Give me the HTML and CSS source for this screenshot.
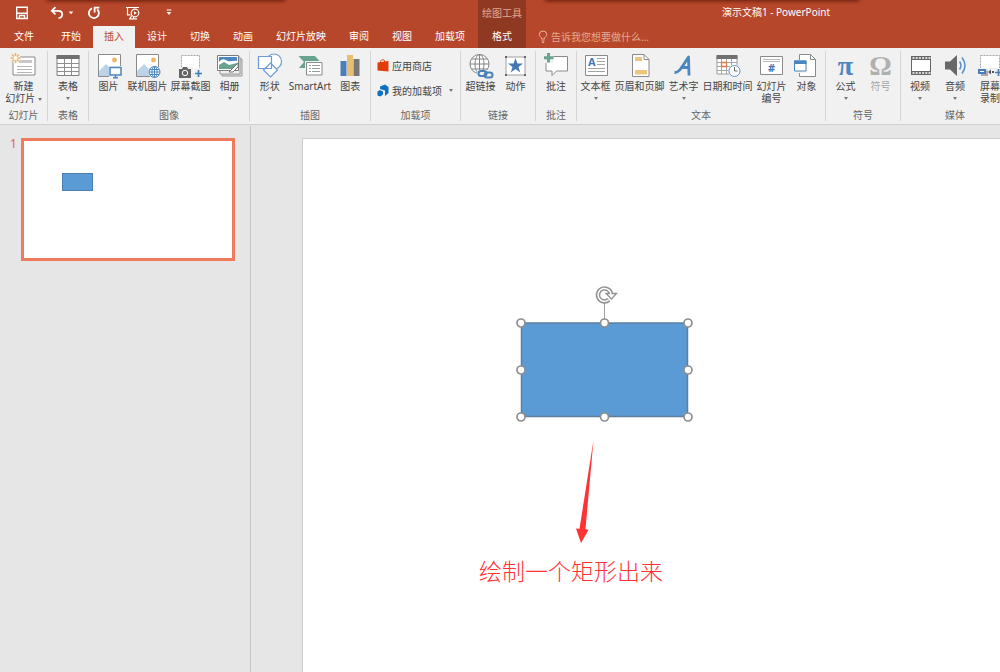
FILE: index.html
```html
<!DOCTYPE html>
<html lang="zh-CN">
<head>
  <meta charset="UTF-8">
  <meta name="viewport" content="width=device-width, initial-scale=1.0">
  <title>演示文稿1 - PowerPoint</title>
  <link rel="stylesheet" href="styles.css">
</head>
<body>

<header class="titlebar">
  <div class="titlebar-left">
    <div class="quick-access">
      <button class="qa-save" aria-label="保存">
        <svg width="14" height="14" viewBox="0 0 14 14" fill="none" stroke="#fff" stroke-width="1.4"><path d="M1.700 1.200h10.600v11.300H1.700zM1.700 7.200h10.600M4.500 12.500v-3h5v3"/></svg>
      </button>
      <button class="qa-undo" aria-label="撤消">
        <svg width="14" height="14" viewBox="0 0 14 14" fill="none" stroke="#fff" stroke-width="1.8"><path d="M5.5 1.2 1.8 4.8l3.7 3.6M2 4.8h6.2c2.6 0 4 1.5 4 3.5S10.700 12 8.500 12.200"/></svg>
      </button>
      <button class="qa-more" aria-label="撤消列表">
        <svg width="6" height="4" viewBox="0 0 6 4"><path d="M.7.5h4.600L3 3.200z" fill="#fff"/></svg>
      </button>
      <button class="qa-redo" aria-label="重复">
        <svg width="14" height="14" viewBox="0 0 14 14" fill="none" stroke="#fff" stroke-width="1.8"><path d="M5 2.400a5 5 0 1 0 5.200.9M7.600 6.500V1.700h4.800"/></svg>
      </button>
      <button class="qa-show" aria-label="从头开始">
        <svg width="16" height="14" viewBox="0 0 16 14" fill="none" stroke="#fff" stroke-width="1.200"><path d="M1 1.500h13M2.500 1.500v7.300h3M7 9.500 4.500 12.800M4 12.800h8M8.500 11v2"/><circle cx="10" cy="7" r="3.800"/><path d="m9 5.200 2.800 1.800L9 8.800z" fill="#fff" stroke="none"/></svg>
      </button>
      <button class="qa-custom" aria-label="自定义快速访问工具栏">
        <svg width="6" height="7" viewBox="0 0 6 7"><path d="M.7.5h4.600v1H.7zM.7 3h4.600L3 6z" fill="#fff"/></svg>
      </button>
    </div>
    <nav class="tabs">
      <button class="tab tab-file">文件</button>
      <button class="tab">开始</button>
      <button class="tab active">插入</button>
      <button class="tab">设计</button>
      <button class="tab">切换</button>
      <button class="tab">动画</button>
      <button class="tab">幻灯片放映</button>
      <button class="tab">审阅</button>
      <button class="tab">视图</button>
      <button class="tab">加载项</button>
    </nav>
  </div>
  <div class="context-tab">
    <span class="context-title">绘图工具</span>
    <button class="tab">格式</button>
  </div>
  <div class="titlebar-right">
    <div class="window-title">演示文稿1 - PowerPoint</div>
    <label class="tell-me">
      <svg width="10" height="13" viewBox="0 0 10 13" fill="none" stroke="#e8b5a5"><path d="M3.500 9V7.800C2.200 7 1.300 5.800 1.300 4.500a3.700 3.500 0 0 1 7.400 0c0 1.300-.9 2.500-2.200 3.300V9zM3.500 11h3M4 12.400h2"/></svg>
      <input type="text" placeholder="告诉我您想要做什么...">
    </label>
  </div>
</header>

<section class="ribbon">
  <div class="group group-slides">
    <div class="group-items">
      <button class="tool">
        <svg class="icon" viewBox="0 0 26 26"><path d="M3 4h22v18H3z" fill="#fff" stroke="#8a8a8a"/><path d="M9 7h13v3H9z" fill="#c8c8c8"/><path d="M7 13.500h15M7 16.500h15M7 19.500h15" stroke="#b5b5b5"/><circle cx="5.500" cy="5" r="5" fill="#f1f1f1"/><path d="M5.500 0v10M.5 5h10M2 1.500l7 7M9 1.500l-7 7" stroke="#eab765" stroke-width="1.500"/><circle cx="5.500" cy="5" r="2" fill="#fff"/></svg>
        <span>新建<br>幻灯片 <i class="caret"></i></span>
      </button>
    </div>
    <div class="group-name">幻灯片</div>
  </div>

  <div class="group group-single">
    <div class="group-items">
      <button class="tool">
        <svg class="icon" viewBox="0 0 26 26"><path d="M2 2.500h22v20H2z" fill="#fff" stroke="#808080"/><path d="M1.500 2h23v4h-23z" fill="#707070"/><path d="M2 10.500h22M2 14.500h22M2 18.500h22M9.500 6v16M16.500 6v16" stroke="#8f8f8f"/></svg>
        <span>表格</span><i class="caret"></i>
      </button>
    </div>
    <div class="group-name">表格</div>
  </div>

  <div class="group group-images">
    <div class="group-items">
      <button class="tool">
        <svg class="icon" viewBox="0 0 26 26"><path d="M2.500 1.500h22v22h-22z" fill="#fff" stroke="#8a8a8a"/><path d="M3 23v-5l7-7 7 7v5z" fill="#bdd3ea"/><circle cx="18.500" cy="7" r="2.400" fill="#eab765"/><path d="M13 13h13v12H13z" fill="#f1f1f1"/><path d="M14 14.500h11v7.500H14z" fill="#fff" stroke="#4a86c0" stroke-width="1.500"/><path d="M19.500 22v2.500M17 24.800h5" stroke="#4a86c0" stroke-width="1.500"/></svg>
        <span>图片</span>
      </button>
      <button class="tool">
        <svg class="icon" viewBox="0 0 26 26"><path d="M1.500 1.500h22v22h-22z" fill="#fff" stroke="#8a8a8a"/><path d="M2 23v-5l7-7 7 7v5z" fill="#bdd3ea"/><circle cx="18.500" cy="7" r="2.400" fill="#eab765"/><circle cx="19.500" cy="19" r="6.500" fill="#f1f1f1"/><g fill="#fff" stroke="#4a86c0"><circle cx="19.500" cy="19" r="5.500"/><ellipse cx="19.500" cy="19" rx="2.600" ry="5.500"/><path d="M14 19h11M15 16.500h9M15 21.500h9M19.500 13.500v11"/></g></svg>
        <span>联机图片</span>
      </button>
      <button class="tool">
        <svg class="icon" viewBox="0 0 26 26"><path d="M3.500 2.500h18v18h-18z" fill="#fff" stroke="#a5a5a5" stroke-dasharray="2 1"/><path d="M0 14h15v11H0z" fill="#f1f1f1"/><path d="M1 16h3l1-2h4l1 2h3v9H1z" fill="#666"/><circle cx="7" cy="20" r="2.700" fill="#666" stroke="#fff"/><path d="M16 15h9v10h-9z" fill="#f1f1f1"/><path d="M20.500 17v7M17 20.500h7" stroke="#3f7fbe" stroke-width="1.700"/></svg>
        <span>屏幕截图</span><i class="caret"></i>
      </button>
      <button class="tool">
        <svg class="icon" viewBox="0 0 26 26"><path d="M5 6h20v17H5z" fill="#d9d9d9" stroke="#9a9a9a"/><path d="M3 4h20v17H3z" fill="#eee" stroke="#9a9a9a"/><path d="M.5 2.500h21v15H.5z" fill="#fff" stroke="#7d7d7d"/><path d="M2 4h18v5H2z" fill="#4a86c0"/><path d="M2 9c4-5 6-2 9-1s6-1 9 0v2H2z" fill="#fff"/><path d="M2 12l5-3 5 3 8-2v6H2z" fill="#69a38f"/><path d="m12 19 9-9v4l-5 5z" fill="#fff" stroke="#777"/></svg>
        <span>相册</span><i class="caret"></i>
      </button>
    </div>
    <div class="group-name">图像</div>
  </div>

  <div class="group group-illustrations">
    <div class="group-items">
      <button class="tool">
        <svg class="icon" viewBox="0 0 26 26" fill="#fff" stroke="#6b9bd0" stroke-width="1.200"><circle cx="17" cy="8.500" r="7.500"/><path d="M1.500 3.500h13v12h-13zM13.500 10l7 7-7 7-7-7z"/></svg>
        <span>形状</span><i class="caret"></i>
      </button>
      <button class="tool">
        <svg class="icon" viewBox="0 0 26 26"><path d="M1.500 3H18l4.500 5-3 7H2l5-6z" fill="#69a38f"/><path d="M8 8h18v15H8z" fill="#f1f1f1"/><path d="M9.500 9.500h15.500V22H9.500z" fill="#fff" stroke="#8a8a8a"/><path d="M12 12.500h2M15 12.500h8M12 15.500h2M15 15.500h8M12 18.500h2M15 18.500h8" stroke="#999"/></svg>
        <span>SmartArt</span>
      </button>
      <button class="tool">
        <svg class="icon" viewBox="0 0 26 26"><path d="M3.500 8h6v15h-6z" fill="#4a7ebb"/><path d="M10 2h6v21h-6z" fill="#e8be73"/><path d="M16.500 6h6v17h-6z" fill="#777"/></svg>
        <span>图表</span>
      </button>
    </div>
    <div class="group-name">插图</div>
  </div>

  <div class="group group-addins">
    <div class="group-items group-rows">
      <button class="tool-row">
        <svg width="12" height="13" viewBox="0 0 12 13"><path d="M.5 3.500 11.500 2v10.500L.5 11.500z" fill="#e03c0c"/><path d="M3.500 4V2.500c0-2 4-2.500 4-.5v1.500" fill="none" stroke="#e03c0c"/></svg>
        应用商店
      </button>
      <button class="tool-row">
        <svg width="12" height="13" viewBox="0 0 12 13"><path d="m3 2.500 5-2L11.500 3v6L8 12V6.500L3 5z" fill="#0f6fc0"/><path d="m.5 7.500 2.500-1.500L6 7.500v3L3.500 12.500.5 11.500z" fill="#0f6fc0"/></svg>
        我的加载项 <i class="caret"></i>
      </button>
    </div>
    <div class="group-name">加载项</div>
  </div>

  <div class="group group-pair">
    <div class="group-items">
      <button class="tool">
        <svg class="icon" viewBox="0 0 26 26" fill="none"><g stroke="#858585"><circle cx="11.500" cy="11" r="9.500" fill="#fff"/><ellipse cx="11.500" cy="11" rx="4.500" ry="9.500"/><path d="M2 11h19M3.500 6h16M3.500 16h16M11.500 1.500v19"/></g><path d="M9 17h17v9H9z" fill="#f1f1f1"/><g stroke="#4a80b8" stroke-width="2"><rect x="10.500" y="18" width="8" height="5" rx="2.500"/><rect x="16.500" y="19.500" width="8" height="5" rx="2.500"/></g></svg>
        <span>超链接</span>
      </button>
      <button class="tool">
        <svg class="icon" viewBox="0 0 26 26"><path d="M3 4h19v18H3z" fill="#fff" stroke="#a0a0a0"/><path d="M2 3h2v2H2zM21 3h2v2h-2zM2 21h2v2H2zM21 21h2v2h-2z" fill="#666"/><path d="m12.500 5 1.900 5.500h5.600l-4.500 3.400 1.700 5.600-4.700-3.400-4.700 3.400 1.700-5.600L5 10.500h5.600z" fill="#4178b5"/></svg>
        <span>动作</span>
      </button>
    </div>
    <div class="group-name">链接</div>
  </div>

  <div class="group group-single">
    <div class="group-items">
      <button class="tool">
        <svg class="icon" viewBox="0 0 26 26"><path d="M4 3.500h20.500V18h-11L9 22.500V18H3V6z" fill="#fff" stroke="#8a8a8a"/><path d="M0 0h10.500v10H0z" fill="#f1f1f1"/><path d="M5.500 0v9.500M1 4.700h9.500" stroke="#69a38f" stroke-width="3"/></svg>
        <span>批注</span>
      </button>
    </div>
    <div class="group-name">批注</div>
  </div>

  <div class="group group-text">
    <div class="group-items">
      <button class="tool">
        <svg class="icon" viewBox="0 0 26 26"><path d="M2.500 2.500h22v20h-22z" fill="#fff" stroke="#8a8a8a"/><text x="5" y="13" class="icon-a">A</text><path d="M14 5.500h8M14 8.500h8M14 11.500h8M5 15.500h17M5 18.500h17" stroke="#a5a5a5"/></svg>
        <span>文本框</span><i class="caret"></i>
      </button>
      <button class="tool">
        <svg class="icon" viewBox="0 0 26 26"><path d="M5.500 1.500h11.500l5 5v17H5.500z" fill="#fff" stroke="#8a8a8a"/><path d="M17 1.500v5h5" fill="none" stroke="#8a8a8a"/><path d="M8 4h7v4H8zM8 17h12v4.500H8z" fill="#edc57c"/></svg>
        <span>页眉和页脚</span>
      </button>
      <button class="tool">
        <svg class="icon" viewBox="0 0 26 26" fill="none" stroke="#4a86c0" stroke-width="2.800"><path d="M3.500 19.500C8.500 20 11.500 13 17.500 4l.5 18.500M9.500 14.500H18" stroke-linejoin="round"/></svg>
        <span>艺术字</span><i class="caret"></i>
      </button>
      <button class="tool">
        <svg class="icon" viewBox="0 0 26 26"><path d="M2 3h20v18H2z" fill="#fff" stroke="#999"/><path d="M1.500 2h21v4h-21z" fill="#707070"/><path d="M2 9.500h20M2 13.500h20M2 17.500h20M6.500 6v15M11.500 6v15M16.500 6v15" stroke="#a5a5a5"/><path d="M6.500 9.500h5v4h-5z" fill="#fff" stroke="#e27a45" stroke-width="1.300"/><circle cx="19.500" cy="18" r="6.500" fill="#f1f1f1"/><circle cx="19.500" cy="18" r="5.500" fill="#fff" stroke="#5b94cd"/><path d="M19.500 14v4h3" fill="none" stroke="#666"/></svg>
        <span>日期和时间</span>
      </button>
      <button class="tool">
        <svg class="icon" viewBox="0 0 26 26"><path d="M1.500 3.500h22v18h-22z" fill="#fff" stroke="#8a8a8a"/><path d="M4 6.500h17M4 8.500h17" stroke="#bbb"/><text x="9" y="19" class="icon-a">#</text></svg>
        <span>幻灯片<br>编号</span>
      </button>
      <button class="tool">
        <svg class="icon" viewBox="0 0 26 26"><path d="M5.500 1.500h11l5 5v17h-16z" fill="#fff" stroke="#8a8a8a"/><path d="M16.500 1.500v5h5" fill="none" stroke="#8a8a8a"/><path d="M0 7h13v13H0z" fill="#f1f1f1"/><path d="M.5 8h11.500v10H.5z" fill="#fff" stroke="#4a86c0"/><path d="M0 7.500h12.500V11H0z" fill="#4a86c0"/></svg>
        <span>对象</span>
      </button>
    </div>
    <div class="group-name">文本</div>
  </div>

  <div class="group group-pair">
    <div class="group-items">
      <button class="tool">
        <span class="icon icon-symbol">π</span>
        <span>公式</span><i class="caret"></i>
      </button>
      <button class="tool" disabled>
        <span class="icon icon-symbol icon-omega">Ω</span>
        <span>符号</span>
      </button>
    </div>
    <div class="group-name">符号</div>
  </div>

  <div class="group group-media">
    <div class="group-items">
      <button class="tool">
        <svg class="icon" viewBox="0 0 26 26"><path d="M4 3h20v19H4z" fill="#666"/><path d="M5 7h18v11H5z" fill="#fff"/><path d="M5.500 5h18M5.500 20h18" stroke="#fff" stroke-width="1.500" stroke-dasharray="2 1.200"/></svg>
        <span>视频</span><i class="caret"></i>
      </button>
      <button class="tool">
        <svg class="icon" viewBox="0 0 26 26"><path d="M3 8.500h5l7-6.500v21l-7-6.500H3z" fill="#686868"/><path d="M17.500 8.500q3 4 0 8M20 4.500q6 8 0 16" fill="none" stroke="#5b94cd" stroke-width="1.600"/></svg>
        <span>音频</span><i class="caret"></i>
      </button>
      <button class="tool">
        <svg class="icon" viewBox="0 0 26 26"><path d="M3.500 2.500h19v16h-19z" fill="#fff" stroke="#a5a5a5" stroke-dasharray="2 1"/><path d="M0 15h26v9H0z" fill="#f1f1f1"/><path d="M4 17.500h7V23H4z" fill="#aaa"/><path d="M1 16h8v5H1z" fill="#4a7ebb"/><path d="M3 18.500h4" stroke="#fff"/><path d="m11 19 3-2.500v5zM15 18h2v2h-2z" fill="#555"/><path d="M21.500 16v7M18 19.500h7" stroke="#3f7fbe" stroke-width="1.700"/></svg>
        <span>屏幕<br>录制</span>
      </button>
    </div>
    <div class="group-name">媒体</div>
  </div>
</section>

<main class="workspace">
  <aside class="thumbnails">
    <span class="slide-number">1</span>
    <div class="thumb">
      <div class="thumb-shape"></div>
    </div>
  </aside>
  <div class="editor">
    <div class="slide">
      <!-- selected rectangle with its handles -->
      <svg class="shape" width="180" height="144" viewBox="0 0 180 144">
        <path d="M90.500 24v20" stroke="#a0a0a0"/>
        <rect x="7.500" y="44" width="166" height="93.500" fill="#5b9bd5" stroke="#5d7f9e" stroke-width="1.500"/>
        <g fill="#fff" stroke="#8f8f8f" stroke-width="1.700">
          <circle cx="7" cy="44" r="4"/><circle cx="90.500" cy="44" r="4"/><circle cx="174" cy="44" r="4"/>
          <circle cx="7" cy="91" r="4"/><circle cx="174" cy="91" r="4"/>
          <circle cx="7" cy="138" r="4"/><circle cx="90.500" cy="138" r="4"/><circle cx="174" cy="138" r="4"/>
        </g>
        <path d="M97 16a6.500 6.500 0 1 0-2.200 4.800" fill="none" stroke="#929292" stroke-width="4.500"/>
        <path d="M92 14.500h10.500l-5 5.500z" fill="#fff" stroke="#929292" stroke-width="1.300"/>
        <path d="M97 16a6.500 6.500 0 1 0-2.200 4.800" fill="none" stroke="#fff" stroke-width="1.500"/>
      </svg>
      <svg class="arrow" width="20" height="104" viewBox="0 0 20 104">
        <path d="M18.500 0 10.500 89l3 1L6 103 1 88.500l3.500.3z" fill="#ff3333"/>
      </svg>
      <p class="note">绘制一个矩形出来</p>
    </div>
  </div>
</main>

</body>
</html>
```
FILE: styles.css
```css
* {
  box-sizing: border-box;
}

body {
  margin: 0;
  height: 100vh;
  display: flex;
  flex-direction: column;
  overflow: hidden;
  background-color: #e6e6e6;
  color: #444;
  font-family: "Noto Sans", "Noto Sans CJK SC", sans-serif;
  font-size: 10px;
  line-height: 12px;
}

button {
  margin: 0;
  padding: 0;
  border: 0;
  background: none;
  color: inherit;
  font: inherit;
  cursor: pointer;
}

svg {
  display: block;
  flex: none;
}

/* title bar and tabs */
.titlebar {
  position: relative;
  display: flex;
  flex: none;
  height: 48px;
  overflow: hidden;
  background-color: #b7472a;
  color: #fff;
}

.titlebar::before,
.titlebar::after {
  content: "";
  position: absolute;
  top: -4px;
  left: 48px;
  width: 236px;
  height: 4px;
  box-shadow: 0 0 4px 1px rgba(60, 10, 0, 0.7);
}

.titlebar::after {
  left: 546px;
  width: 312px;
}

.titlebar-left,
.titlebar-right {
  display: flex;
  flex-direction: column;
}

.titlebar-left {
  width: 478px;
}

.titlebar-right {
  flex: 1;
}

.quick-access {
  display: flex;
  align-items: center;
  height: 25px;
  padding-left: 15px;
}

.qa-undo {
  margin-left: 21px;
}

.qa-more {
  margin-left: 4px;
}

.qa-redo {
  margin-left: 13px;
}

.qa-show {
  margin-left: 24px;
}

.qa-custom {
  margin-left: 25px;
}

.tabs {
  display: flex;
  gap: 1px;
}

.tab {
  height: 23px;
  padding: 0 11px 1px;
  white-space: nowrap;
}

.tab-file {
  padding: 0 15px 1px 14px;
}

.tab.active {
  margin-top: 1px;
  height: 22px;
  padding-bottom: 2px;
  background-color: #f1f1f1;
  color: #b7472a;
}

.context-tab {
  display: flex;
  flex-direction: column;
  flex: none;
  width: 48px;
  background-color: #8f3822;
  text-align: center;
}

.context-title {
  height: 25px;
  line-height: 26px;
  color: #e3a894;
}

.window-title {
  height: 25px;
  padding-left: 26px;
  line-height: 25px;
  text-align: center;
}

.tell-me {
  display: flex;
  align-items: center;
  gap: 3px;
  height: 23px;
  padding-left: 12px;
}

.tell-me input {
  flex: 1;
  padding: 0;
  border: 0;
  outline: 0;
  background: none;
  color: #fff;
  font: inherit;
}

.tell-me input::placeholder {
  color: #e3a894;
}

/* ribbon */
.ribbon {
  display: flex;
  flex: none;
  overflow: hidden;
  padding: 3px 0;
  border-bottom: 1px solid #d0d0d0;
  background-color: #f1f1f1;
}

.group {
  display: flex;
  flex-direction: column;
  flex: none;
  height: 70px;
  border-right: 1px solid #d5d5d5;
}

.group-slides {
  width: 48px;
}

.group-single {
  width: 41px;
}

.group-images {
  width: 161px;
}

.group-illustrations {
  width: 121px;
}

.group-addins {
  width: 90px;
}

.group-pair {
  width: 75px;
}

.group-text {
  width: 249px;
}

.group-media {
  width: 109px;
}

.group-items {
  display: flex;
  flex: 1;
  justify-content: center;
  gap: 1px;
}

.group-name {
  line-height: 12px;
  color: #666;
  text-align: center;
}

.tool {
  display: flex;
  flex-direction: column;
  align-items: center;
  min-width: 34px;
  padding: 2px 1px 0;
  white-space: nowrap;
}

.tool:disabled {
  color: #a6a6a6;
}

.icon {
  width: 26px;
  height: 26px;
  margin-bottom: 1px;
}

.icon-a {
  fill: #4178b5;
  font: bold 11px "Noto Sans", sans-serif;
}

.icon-symbol {
  color: #4a86c0;
  font: bold 28px/26px "Liberation Serif", serif;
  text-align: center;
}

.icon-omega {
  color: #b0b0b0;
}

.caret {
  display: inline-block;
  border: 2px solid transparent;
  border-top: 3px solid #777;
  border-bottom: 0;
  vertical-align: middle;
}

.tool > .caret {
  margin-top: 5px;
}

.group-rows {
  flex-direction: column;
  justify-content: flex-start;
  gap: 12px;
  padding: 8px 0 0 6px;
}

.tool-row {
  display: flex;
  align-items: center;
  gap: 3px;
  white-space: nowrap;
}

.tool-row .caret {
  margin-left: 4px;
}

/* slide list and canvas */
.workspace {
  display: flex;
  flex: 1;
  min-height: 0;
}

.thumbnails {
  display: flex;
  flex: none;
  align-items: flex-start;
  gap: 4px;
  width: 251px;
  margin-top: 1px;
  padding: 12px 15px 0 10px;
  border-right: 1px solid #c6c6c6;
}

.slide-number {
  width: 7px;
  color: #e8613c;
  font-size: 12px;
}

.thumb {
  flex: 1;
  aspect-ratio: 214 / 123;
  padding: 32px 38px;
  border: 3px solid #f07a5c;
  background-color: #fff;
}

.thumb-shape {
  width: 31px;
  height: 18px;
  border: 1px solid #4a7fb0;
  background-color: #5b9bd5;
}

.editor {
  display: flex;
  flex: 1;
  padding: 13px 0 0 51px;
}

.slide {
  position: relative;
  flex: 1;
  border: 1px solid #cdcdcd;
  border-width: 1px 0 0 1px;
  background-color: #fff;
}

.shape {
  position: absolute;
  left: 211px;
  top: 140px;
}

.arrow {
  position: absolute;
  left: 272px;
  top: 301px;
}

.note {
  position: absolute;
  left: 176px;
  top: 416px;
  margin: 0;
  color: #ff3333;
  font-family: "Liberation Serif", "Noto Sans CJK SC", serif;
  font-size: 23px;
  font-weight: 300;
  line-height: 36px;
  white-space: nowrap;
}
```
